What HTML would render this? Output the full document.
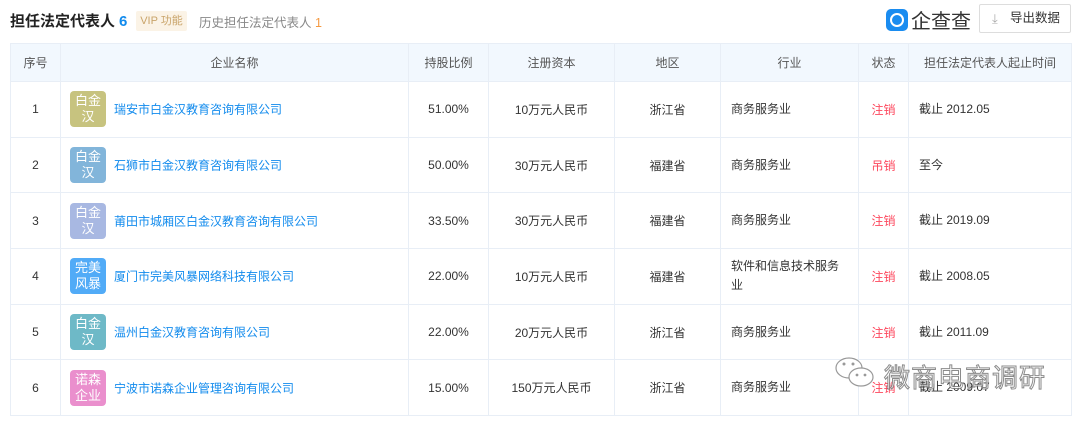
<!DOCTYPE html><html><head><meta charset="utf-8"><style>
*{margin:0;padding:0;box-sizing:border-box}
body{width:1080px;height:422px;background:#fff;font-family:"Liberation Sans","Noto Sans CJK SC",sans-serif;font-size:12px;color:#333;position:relative;overflow:hidden}
.title{position:absolute;left:10px;top:10px;font-size:15px;font-weight:bold;color:#222}
.title b{color:#128bed;margin-left:4px}
.vip{position:absolute;left:136px;top:11px;width:51px;height:20px;background:#fbf3e6;color:#c9a46a;font-size:11px;line-height:20px;text-align:center;border-radius:2px}
.hist{position:absolute;left:199px;top:12px;font-size:12.5px;color:#888}
.hist span{color:#f59a42}
.logo{position:absolute;left:886px;top:5px;font-size:20px;color:#333;display:flex;align-items:center}
.logo i{width:22px;height:22px;background:#1a8cf0;border-radius:5px;margin-right:3px;display:inline-block;position:relative}
.logo i:after{content:"";position:absolute;left:4px;top:4px;width:10px;height:10px;border:2px solid #fff;border-radius:50%}
.exp{position:absolute;left:979px;top:4px;width:92px;height:29px;border:1px solid #ddd;border-radius:2px;font-size:12.5px;line-height:27px;text-align:right;padding-right:10px;color:#333}
.exp:before{content:"⤓";position:absolute;left:12px;color:#aaa;font-size:13px}
table{position:absolute;left:10px;top:43px;width:1061px;border-collapse:collapse;table-layout:fixed}
td,th{border:1px solid #e8eef6;text-align:center;font-weight:normal}
th{background:#f2f8fe;height:38px;color:#555}
td{height:55.7px}
td.n{text-align:left;padding-left:9px}
td.l{text-align:left;padding-left:10px;line-height:19px}
.lg{display:inline-block;width:36px;height:36px;border-radius:4px;color:#fff;font-size:13px;line-height:16px;text-align:center;padding-top:2px;vertical-align:middle;margin-right:8px;opacity:.9}
.n a{color:#128bed;vertical-align:middle}
.red{color:#fd485e}
.wm{position:absolute;left:884px;top:358px;font-size:26px;color:#fff;-webkit-text-stroke:1px #777;opacity:.85;letter-spacing:1px}
.wc{position:absolute;left:834px;top:356px}
</style></head><body>
<div class="title">担任法定代表人<b>6</b></div>
<div class="vip">VIP 功能</div>
<div class="hist">历史担任法定代表人 <span>1</span></div>
<div class="logo"><i></i>企查查</div>
<div class="exp">导出数据</div>
<table>
<colgroup><col style="width:50px"><col style="width:348px"><col style="width:80px"><col style="width:126px"><col style="width:106px"><col style="width:138px"><col style="width:50px"><col style="width:163px"></colgroup>
<tr><th>序号</th><th>企业名称</th><th>持股比例</th><th>注册资本</th><th>地区</th><th>行业</th><th>状态</th><th>担任法定代表人起止时间</th></tr>
<tr><td>1</td><td class="n"><span class="lg" style="background:#c2bd72">白金<br>汉</span><a>瑞安市白金汉教育咨询有限公司</a></td><td>51.00%</td><td>10万元人民币</td><td>浙江省</td><td class="l">商务服务业</td><td class="red">注销</td><td class="l">截止 2012.05</td></tr>
<tr><td>2</td><td class="n"><span class="lg" style="background:#75aed6">白金<br>汉</span><a>石狮市白金汉教育咨询有限公司</a></td><td>50.00%</td><td>30万元人民币</td><td>福建省</td><td class="l">商务服务业</td><td class="red">吊销</td><td class="l">至今</td></tr>
<tr><td>3</td><td class="n"><span class="lg" style="background:#9fb1df">白金<br>汉</span><a>莆田市城厢区白金汉教育咨询有限公司</a></td><td>33.50%</td><td>30万元人民币</td><td>福建省</td><td class="l">商务服务业</td><td class="red">注销</td><td class="l">截止 2019.09</td></tr>
<tr><td>4</td><td class="n"><span class="lg" style="background:#3fa2f7">完美<br>风暴</span><a>厦门市完美风暴网络科技有限公司</a></td><td>22.00%</td><td>10万元人民币</td><td>福建省</td><td class="l">软件和信息技术服务<br>业</td><td class="red">注销</td><td class="l">截止 2008.05</td></tr>
<tr><td>5</td><td class="n"><span class="lg" style="background:#5fb2c2">白金<br>汉</span><a>温州白金汉教育咨询有限公司</a></td><td>22.00%</td><td>20万元人民币</td><td>浙江省</td><td class="l">商务服务业</td><td class="red">注销</td><td class="l">截止 2011.09</td></tr>
<tr><td>6</td><td class="n"><span class="lg" style="background:#e883c8">诺森<br>企业</span><a>宁波市诺森企业管理咨询有限公司</a></td><td>15.00%</td><td>150万元人民币</td><td>浙江省</td><td class="l">商务服务业</td><td class="red">注销</td><td class="l">截止 2009.07</td></tr>
</table>
<svg class="wc" width="44" height="34" viewBox="0 0 44 34"><ellipse cx="15" cy="12" rx="13" ry="10" fill="#fff" stroke="#999" stroke-width="1.2"/><ellipse cx="27" cy="21" rx="12" ry="9" fill="#fff" stroke="#999" stroke-width="1.2"/><circle cx="10" cy="8" r="1.5" fill="#999"/><circle cx="19" cy="8" r="1.5" fill="#999"/><circle cx="23" cy="19" r="1.4" fill="#999"/><circle cx="31" cy="19" r="1.4" fill="#999"/></svg>
<div class="wm">微商电商调研</div>
</body></html>
